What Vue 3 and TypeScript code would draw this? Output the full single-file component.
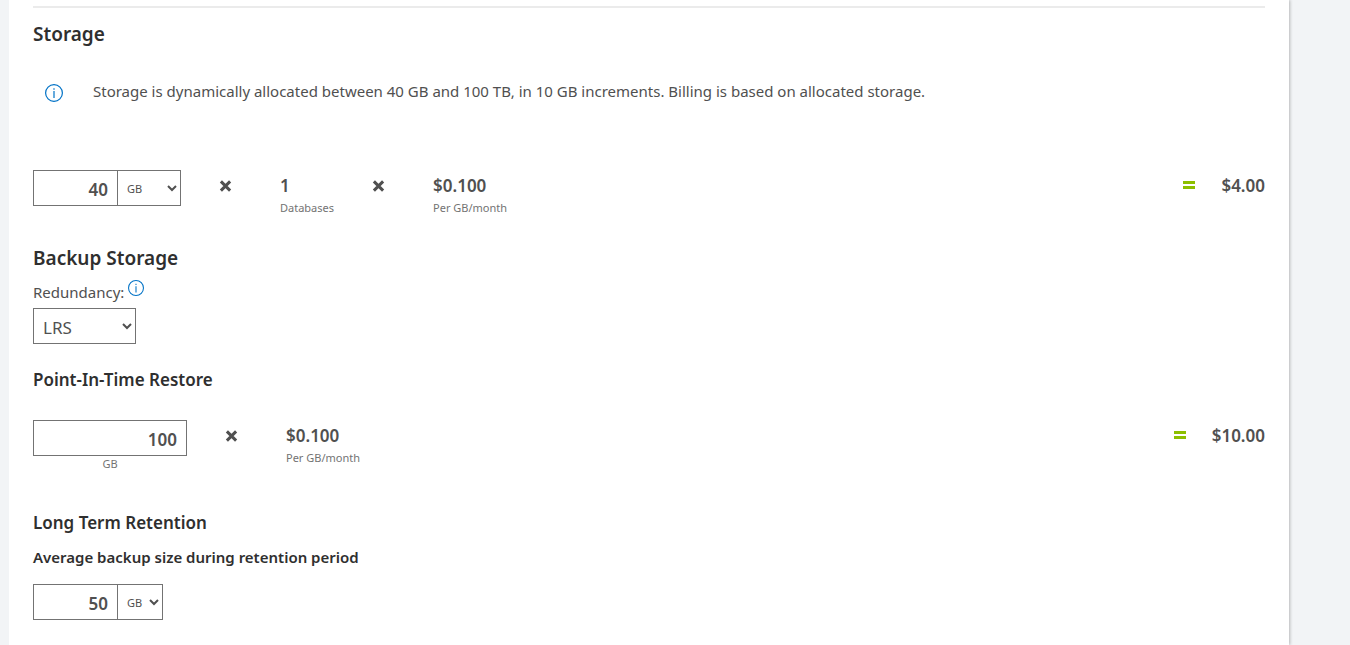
<script setup lang="ts">
import { ref } from 'vue'

const storage = ref('40')
const storageUnit = ref('GB')
const redundancy = ref('LRS')
const restore = ref('100')
const retention = ref('50')
const retentionUnit = ref('GB')
</script>

<template>
  <div class="page">
    <main class="panel">
      <hr class="rule" />
      <section class="storage">
        <h2>Storage</h2>
        <div class="message">
          <svg class="info info-large" viewBox="0 0 18 18" aria-hidden="true">
            <circle cx="9" cy="9" r="8.4" />
            <path d="M9 7v7M9 4.2v1.5" />
          </svg>
          <p>Storage is dynamically allocated between 40 GB and 100 TB, in 10 GB increments. Billing is based on allocated storage.</p>
        </div>
        <div class="row">
          <div class="combo">
            <input v-model="storage" class="amount" type="text" aria-label="Storage amount" />
            <select v-model="storageUnit" class="unit unit-wide" aria-label="Storage unit">
              <option>GB</option>
              <option>TB</option>
            </select>
          </div>
          <svg class="times" viewBox="0 0 13 13" role="img" aria-label="times"><path d="M1.9 1.4l9.2 9.2M11.1 1.4l-9.2 9.2" /></svg>
          <div class="factor">
            <span class="value">1</span>
            <span class="caption">Databases</span>
          </div>
          <svg class="times" viewBox="0 0 13 13" role="img" aria-label="times"><path d="M1.9 1.4l9.2 9.2M11.1 1.4l-9.2 9.2" /></svg>
          <div class="factor">
            <span class="value">$0.100</span>
            <span class="caption">Per GB/month</span>
          </div>
          <div class="total">
            <svg class="equals" viewBox="0 0 12 13" role="img" aria-label="equals"><path d="M0 1h12v3H0zM0 6h12v3H0z" /></svg>
            <span class="value">$4.00</span>
          </div>
        </div>
      </section>

      <section class="backup">
        <h2>Backup Storage</h2>
        <div class="label-line">
          <label for="redundancy">Redundancy:</label>
          <svg class="info info-small" viewBox="0 0 18 18" aria-hidden="true">
            <circle cx="9" cy="9" r="8.4" />
            <path d="M9 7v7M9 4.2v1.5" />
          </svg>
        </div>
        <select id="redundancy" v-model="redundancy" class="redundancy">
          <option>LRS</option>
          <option>ZRS</option>
          <option>RA-GRS</option>
        </select>
      </section>

      <section class="restore">
        <h3>Point-In-Time Restore</h3>
        <div class="row">
          <div class="stack">
            <input id="restore" v-model="restore" class="amount amount-wide" type="text" />
            <label for="restore" class="caption">GB</label>
          </div>
          <svg class="times" viewBox="0 0 13 13" role="img" aria-label="times"><path d="M1.9 1.4l9.2 9.2M11.1 1.4l-9.2 9.2" /></svg>
          <div class="factor">
            <span class="value">$0.100</span>
            <span class="caption">Per GB/month</span>
          </div>
          <div class="total">
            <svg class="equals" viewBox="0 0 12 13" role="img" aria-label="equals"><path d="M0 1h12v3H0zM0 6h12v3H0z" /></svg>
            <span class="value">$10.00</span>
          </div>
        </div>
      </section>

      <section class="retention">
        <h3>Long Term Retention</h3>
        <h4><label for="retention">Average backup size during retention period</label></h4>
        <div class="combo">
          <input id="retention" v-model="retention" class="amount" type="text" />
          <select v-model="retentionUnit" class="unit" aria-label="Backup size unit">
            <option>GB</option>
            <option>TB</option>
          </select>
        </div>
      </section>
    </main>
  </div>
</template>

<style>
body {
  background: #f2f4f6;
}
</style>

<style scoped>
.page {
  box-sizing: border-box;
  min-height: 100vh;
  display: flex;
  padding: 0 61px 0 9px;
  background: #f2f4f6;
  color: #505050;
  font-family: "Segoe UI", "Noto Sans", "Open Sans", sans-serif;
  font-size: 15px;
  line-height: 24px;
}
.panel {
  box-sizing: border-box;
  flex: 1;
  padding: 6px 24px 25px;
  background: #fff;
  box-shadow: 1px 0 3px rgba(0, 0, 0, 0.25);
  clip-path: inset(0 -5px 0 0);
}
.rule {
  height: 2px;
  margin: 0;
  border: 0;
  background: #ebebeb;
}
h2,
h3,
h4,
p {
  margin: 0;
}
h2,
h3,
h4 {
  color: #2f2f2f;
  font-weight: 600;
}
h2 {
  font-size: 19px;
  line-height: 28px;
}
h3 {
  font-size: 17px;
  line-height: 24px;
}
h4 {
  font-size: 15px;
  line-height: 24px;
}
.storage {
  padding-top: 12px;
}
.message {
  display: flex;
  align-items: flex-end;
  gap: 30px;
  margin-top: 31px;
  padding-left: 12px;
}
.info {
  flex: none;
  fill: none;
  stroke: #0072c6;
  stroke-width: 1.2;
}
.info-large {
  width: 18px;
  height: 18px;
}
.info-small {
  width: 16px;
  height: 16px;
}
.message .info {
  margin-bottom: 1px;
}
.row {
  display: flex;
  align-items: flex-start;
}
.storage .row {
  margin-top: 67px;
}
.combo {
  display: flex;
}
.amount,
select {
  box-sizing: border-box;
  height: 36px;
  margin: 0;
  border: 1px solid #737373;
  border-radius: 0;
  background: #fff;
  color: #505050;
  font-family: inherit;
}
.amount {
  width: 85px;
  padding: 2px 9px 0;
  font-size: 17px;
  font-weight: 600;
  text-align: right;
}
.amount-wide {
  width: 154px;
}
.unit {
  width: 46px;
  margin-left: -1px;
  padding: 0 0 0 5px;
  font-size: 11px;
}
.unit-wide {
  width: 64px;
}
.redundancy {
  width: 103px;
  padding: 2px 0 0 5px;
  font-size: 17px;
}
.times {
  flex: none;
  width: 13px;
  height: 13px;
  margin: 10px 48px 0 38px;
  fill: none;
  stroke: #505050;
  stroke-width: 3;
}
.factor,
.stack {
  display: flex;
  flex-direction: column;
}
.factor {
  padding-top: 4px;
}
.stack {
  align-items: center;
}
.value {
  font-size: 17px;
  font-weight: 600;
  line-height: 24px;
}
.caption {
  color: #737373;
  font-size: 11px;
  line-height: 16px;
}
.factor .caption {
  margin-top: 2px;
}
.total {
  display: flex;
  align-items: center;
  gap: 26px;
  margin-left: auto;
  padding-top: 4px;
}
.equals {
  width: 12px;
  height: 13px;
  fill: #8cbf00;
}
.backup {
  margin-top: 28px;
}
.label-line {
  display: flex;
  align-items: flex-start;
  gap: 4px;
  margin-top: 8px;
  margin-bottom: 4px;
}
.restore {
  margin-top: 24px;
}
.restore .row {
  margin-top: 28px;
}
.redundancy {
  display: block;
}
.retention {
  margin-top: 39px;
}
.retention h4 {
  margin-top: 10px;
}
.retention .combo {
  margin-top: 15px;
}
</style>
